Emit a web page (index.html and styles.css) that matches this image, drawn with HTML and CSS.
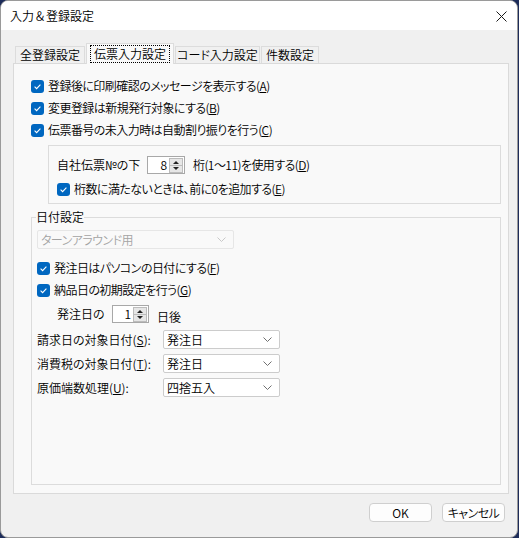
FILE: index.html
```html
<!DOCTYPE html>
<html lang="ja">
<head>
<meta charset="utf-8">
<title>入力＆登録設定</title>
<link rel="stylesheet" href="styles.css">
</head>
<body>
<div class="window">
  <div class="titlebar">
    <span class="title">入力＆登録設定</span>
    <svg class="close" width="11" height="11" viewBox="0 0 11 11"><path d="M0.5 0.5L10.5 10.5M10.5 0.5L0.5 10.5" stroke="#1a1a1a" stroke-width="1" fill="none"/></svg>
  </div>
  <div class="client">
    <div class="tabs">
      <div class="tab t1">全登録設定</div>
      <div class="tab t2 active"><span class="focus">伝票入力設定</span></div>
      <div class="tab t3">コード入力設定</div>
      <div class="tab t4">件数設定</div>
    </div>
    <div class="panel">
      <div class="row">
        <svg class="cb" viewBox="0 0 13 13"><rect width="13" height="13" rx="3" fill="#0067c0"/><path d="M3.6 6.7L5.6 8.7L9.4 4.7" stroke="#fff" stroke-width="1.1" fill="none"/></svg>
        <span class="kana">登録後に印刷確認のメッセージを表示する(<u>A</u>)</span>
      </div>
      <div class="row">
        <svg class="cb" viewBox="0 0 13 13"><rect width="13" height="13" rx="3" fill="#0067c0"/><path d="M3.6 6.7L5.6 8.7L9.4 4.7" stroke="#fff" stroke-width="1.1" fill="none"/></svg>
        <span class="kana">変更登録は新規発行対象にする(<u>B</u>)</span>
      </div>
      <div class="row">
        <svg class="cb" viewBox="0 0 13 13"><rect width="13" height="13" rx="3" fill="#0067c0"/><path d="M3.6 6.7L5.6 8.7L9.4 4.7" stroke="#fff" stroke-width="1.1" fill="none"/></svg>
        <span class="kana">伝票番号の未入力時は自動割り振りを行う(<u>C</u>)</span>
      </div>

      <div class="box">
        <div class="spinrow">
          <span class="lbl-no">自社伝票№の下</span>
          <span class="spin">
            <span class="val">8</span>
            <svg class="arrows" width="14" height="15" viewBox="0 0 14 15"><rect x="0.5" y="0.5" width="13" height="14" fill="#e6e6e6" stroke="#bcbcbc"/><line x1="1" y1="7.5" x2="13" y2="7.5" stroke="#bcbcbc"/><path d="M4 6L7 3L10 6Z" fill="#222"/><path d="M4 9L7 12L10 9Z" fill="#222"/></svg>
          </span>
          <span class="after kana">桁(1～11)を使用する(<u>D</u>)</span>
        </div>
        <div class="row">
          <svg class="cb" viewBox="0 0 13 13"><rect width="13" height="13" rx="3" fill="#0067c0"/><path d="M3.6 6.7L5.6 8.7L9.4 4.7" stroke="#fff" stroke-width="1.1" fill="none"/></svg>
          <span class="kana">桁数に満たないときは、前に0を追加する(<u>E</u>)</span>
        </div>
      </div>

      <fieldset class="group">
        <legend>日付設定</legend>
        <div class="combo disabled wide">
          <span class="kana">ターンアラウンド用</span>
          <svg class="chev" width="9" height="5" viewBox="0 0 9 5"><path d="M0.5 0.5L4.5 4.5L8.5 0.5" stroke="#c8c8c8" fill="none"/></svg>
        </div>
        <div class="row first">
          <svg class="cb" viewBox="0 0 13 13"><rect width="13" height="13" rx="3" fill="#0067c0"/><path d="M3.6 6.7L5.6 8.7L9.4 4.7" stroke="#fff" stroke-width="1.1" fill="none"/></svg>
          <span class="kana">発注日はパソコンの日付にする(<u>F</u>)</span>
        </div>
        <div class="row">
          <svg class="cb" viewBox="0 0 13 13"><rect width="13" height="13" rx="3" fill="#0067c0"/><path d="M3.6 6.7L5.6 8.7L9.4 4.7" stroke="#fff" stroke-width="1.1" fill="none"/></svg>
          <span class="kana">納品日の初期設定を行う(<u>G</u>)</span>
        </div>
        <div class="spinrow days">
          <span class="lbl-days">発注日の</span>
          <span class="spin small">
            <span class="val">1</span>
            <svg class="arrows" width="14" height="15" viewBox="0 0 14 15"><rect x="0.5" y="0.5" width="13" height="14" fill="#e6e6e6" stroke="#bcbcbc"/><line x1="1" y1="7.5" x2="13" y2="7.5" stroke="#bcbcbc"/><path d="M4 6L7 3L10 6Z" fill="#222"/><path d="M4 9L7 12L10 9Z" fill="#222"/></svg>
          </span>
          <span class="after low">日後</span>
        </div>
        <div class="frow">
          <span class="flbl">請求日の対象日付(<u>S</u>):</span>
          <div class="combo">
            <span>発注日</span>
            <svg class="chev" width="9" height="5" viewBox="0 0 9 5"><path d="M0.5 0.5L4.5 4.5L8.5 0.5" stroke="#707070" fill="none"/></svg>
          </div>
        </div>
        <div class="frow">
          <span class="flbl">消費税の対象日付(<u>T</u>):</span>
          <div class="combo">
            <span>発注日</span>
            <svg class="chev" width="9" height="5" viewBox="0 0 9 5"><path d="M0.5 0.5L4.5 4.5L8.5 0.5" stroke="#707070" fill="none"/></svg>
          </div>
        </div>
        <div class="frow">
          <span class="flbl">原価端数処理(<u>U</u>):</span>
          <div class="combo">
            <span>四捨五入</span>
            <svg class="chev" width="9" height="5" viewBox="0 0 9 5"><path d="M0.5 0.5L4.5 4.5L8.5 0.5" stroke="#707070" fill="none"/></svg>
          </div>
        </div>
      </fieldset>
    </div>
    <div class="buttons">
      <button class="btn">OK</button>
      <button class="btn kana">キャンセル</button>
    </div>
  </div>
</div>
</body>
</html>
```

FILE: styles.css
```css
* { box-sizing: border-box; }
html, body { margin: 0; padding: 0; }
body {
  width: 519px;
  height: 538px;
  overflow: hidden;
  background: #1d2c5a;
  font-family: "Noto Sans CJK JP", "Noto Sans", sans-serif;
  font-size: 12px;
  font-weight: 350;
  line-height: 16px;
  color: #000;
  font-feature-settings: "palt";
}
u { text-decoration: underline; text-underline-offset: 1px; }
.kana { letter-spacing: -0.55px; }

.window {
  width: 518px;
  height: 538px;
  background: #f0f0f0;
  border: 1px solid #9a9a9a;
  border-radius: 8px;
  overflow: hidden;
  display: flex;
  flex-direction: column;
}

.titlebar {
  height: 29px;
  flex: none;
  background: #fff;
  display: flex;
  align-items: center;
  justify-content: space-between;
  padding: 0 10px 0 9px;
}
.title { font-size: 12px; font-feature-settings: normal; }
.close { display: block; margin-top: 1px; }

.client {
  flex: 1;
  display: flex;
  flex-direction: column;
  padding: 13px 9px 0 12px;
}

.tabs {
  display: flex;
  align-items: flex-end;
  gap: 1px;
  height: 20px;
  padding-left: 2px;
  position: relative;
  z-index: 1;
}
.tab {
  height: 17px;
  border: 1px solid #dcdcdc;
  border-bottom: none;
  background: #f0f0f0;
  padding: 0;
  text-align: center;
  line-height: 15px;
  white-space: nowrap;
}
.t1 { width: 70px; }
.t2 { width: 88px; }
.t3 { width: 85px; }
.t4 { width: 58px; }
.tab.active {
  height: 21px;
  margin-bottom: -1px;
  background: #f9f9f9;
  padding: 2px 0 0 0;
}
.focus {
  display: inline-block;
  outline: 1px dotted #000;
  outline-offset: 0;
  padding: 0 3px;
  line-height: 16px;
}

.panel {
  width: 496px;
  height: 431px;
  flex: none;
  background: #f9f9f9;
  border: 1px solid #dadada;
  padding: 11px 7px 8px 17px;
  display: flex;
  flex-direction: column;
}

.row {
  height: 22px;
  display: flex;
  align-items: center;
  gap: 4px;
  white-space: nowrap;
}
.cb { width: 13px; height: 13px; flex: none; display: block; }

.box {
  margin: 4px 0 0 17px;
  height: 59px;
  border: 1px solid #dcdcdc;
  padding: 10px 8px 0 8px;
  flex: none;
}
.box .row { margin-top: 4px; }

.spinrow {
  height: 18px;
  display: flex;
  align-items: center;
  white-space: nowrap;
}
.lbl-no { width: 90px; }
.spin {
  width: 38px;
  height: 18px;
  background: #fff;
  border: 1px solid #a8a8a8;
  display: flex;
  align-items: center;
  justify-content: flex-end;
  padding: 0 1px 0 0;
  gap: 2px;
}
.spin .val { line-height: 14px; }
.arrows { display: block; flex: none; }
.after { margin-left: 8px; }

.group {
  margin: 5px 0 0 0;
  min-width: 0;
  flex: 1;
  border: 1px solid #dcdcdc;
  padding: 5px 6px 0 5px;
}
.group legend {
  padding: 0;
  margin-left: -1px;
  line-height: 16px;
}
.group .row.first { margin-top: 8px; }

.combo {
  width: 117px;
  height: 19px;
  background: #fff;
  border: 1px solid #cccccc;
  border-radius: 2px;
  display: flex;
  align-items: center;
  justify-content: space-between;
  padding: 0 7px 0 3px;
  white-space: nowrap;
}
.combo.wide { width: 197px; }
.combo.disabled {
  background: #f9f9f9;
  border-color: #e6e6e6;
  color: #a3a3a3;
}
.chev { display: block; flex: none; }

.spinrow.days {
  margin-top: 4px;
  padding-left: 20px;
  align-items: center;
}
.lbl-days { width: 55px; }
.spin.small { width: 37px; }
.after.low { align-self: flex-end; line-height: 13px; }

.frow {
  display: flex;
  align-items: center;
  height: 19px;
  margin-top: 5px;
  white-space: nowrap;
}
.spinrow.days + .frow { margin-top: 7px; }
.flbl { width: 126px; }

.buttons {
  display: flex;
  justify-content: flex-end;
  gap: 10px;
  margin-top: 9px;
  padding-right: 3px;
}
.btn {
  width: 63px;
  height: 19px;
  padding: 0;
  background: #fdfdfd;
  border: 1px solid #cfcfcf;
  border-radius: 4px;
  font: inherit;
  font-size: 12px;
  line-height: 16px;
  color: #000;
}
```
